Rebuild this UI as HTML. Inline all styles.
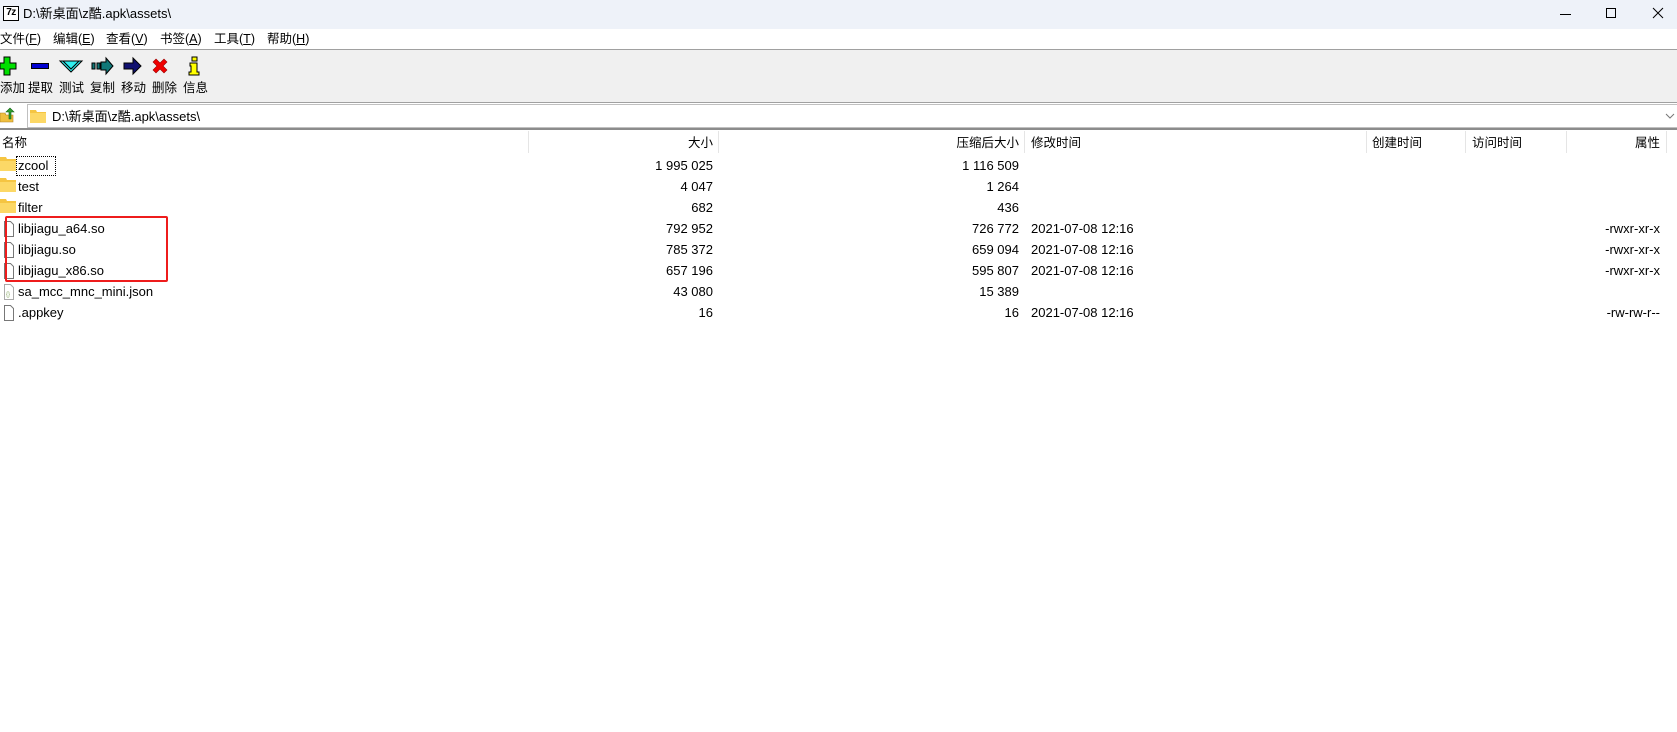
<!DOCTYPE html>
<html><head><meta charset="utf-8"><style>
*{margin:0;padding:0;box-sizing:border-box}
body{width:1677px;height:732px;background:#fff;position:relative;overflow:hidden;font-family:"Liberation Sans","Noto Sans CJK SC",sans-serif;font-size:12px;color:#000}
.a{position:absolute;white-space:nowrap;line-height:16px}
.r{text-align:right}
.d{line-height:21px;font-size:13px}
.h{font-size:12.5px}
</style></head><body>
<!-- title bar -->
<div class="a" style="left:0;top:0;width:1677px;height:29px;background:#eef2f9"></div>
<div class="a" style="left:3px;top:6px;width:16px;height:15px;border:1.5px solid #000;background:#fff;font:bold 10px 'Liberation Sans';line-height:12px;text-align:center;letter-spacing:-0.5px">7z</div>
<div class="a" style="left:23px;top:6px;font-size:13px">D:\新桌面\z酷.apk\assets\</div>
<svg class="a" style="left:1556px;top:6px" width="115" height="16"><path d="M4 8.5h11" stroke="#000" stroke-width="1"/><rect x="50.5" y="2.5" width="9" height="9" fill="none" stroke="#000"/><path d="M97 2l10 10M107 2l-10 10" stroke="#000" stroke-width="1"/></svg>
<!-- menu -->
<div class="a" style="left:0;top:29px;width:1677px;height:20px;background:#fff"></div>
<div class="a h" style="left:0;top:31px">文件(<u>F</u>)</div>
<div class="a h" style="left:53px;top:31px">编辑(<u>E</u>)</div>
<div class="a h" style="left:106px;top:31px">查看(<u>V</u>)</div>
<div class="a h" style="left:160px;top:31px">书签(<u>A</u>)</div>
<div class="a h" style="left:214px;top:31px">工具(<u>T</u>)</div>
<div class="a h" style="left:267px;top:31px">帮助(<u>H</u>)</div>
<!-- toolbar -->
<div class="a" style="left:0;top:49px;width:1677px;height:54px;background:#f0f0f0;border-top:1px solid #a0a0a0;border-bottom:1px solid #a0a0a0"></div>
<svg class="a" style="left:0;top:56px" width="210" height="20">
<path d="M4 1h6v6h6v6h-6v6h-6v-6h-4v-6h4z" fill="#00e000" stroke="#000"/>
<rect x="31.5" y="7.5" width="17" height="5" fill="#0000d0" stroke="#000"/>
<path d="M60 5h22l-11 11z" fill="#30f0f0" stroke="#000"/><path d="M63 5l8 8 8-8" fill="none" stroke="#000"/>
<path d="M92 7h3v6h-3zM97 7h3v6h-3zM101 6h5v-4l7 8-7 8v-4h-5z" fill="#107878" stroke="#000"/>
<path d="M124 7h9v-5l8 8-8 8v-5h-9z" fill="#101070" stroke="#000"/>
<path d="M156 3l4 4 4-4 3 3-4 4 4 4-3 3-4-4-4 4-3-3 4-4-4-4z" fill="#f00000" stroke="#900" stroke-width=".6"/>
<rect x="192" y="1" width="5" height="4" fill="#ff0" stroke="#000"/><path d="M190 7h7v9h2v3h-10v-3h2v-6h-1z" fill="#ff0" stroke="#000"/>
</svg>
<div class="a h" style="left:0;top:80px">添加</div>
<div class="a h" style="left:28px;top:80px">提取</div>
<div class="a h" style="left:59px;top:80px">测试</div>
<div class="a h" style="left:90px;top:80px">复制</div>
<div class="a h" style="left:121px;top:80px">移动</div>
<div class="a h" style="left:152px;top:80px">删除</div>
<div class="a h" style="left:183px;top:80px">信息</div>
<!-- address -->
<svg class="a" style="left:0;top:107px" width="16" height="16"><path d="M0 6h5l1 2h7v7h-13z" fill="#f0c040" stroke="#b08020" stroke-width=".6"/><path d="M9 12v-7h-3l4-4 4 4h-3v7z" fill="#30a030" stroke="#106010" stroke-width=".6"/></svg>
<div class="a" style="left:27px;top:104px;width:1650px;height:24px;border:1px solid #c0c0c0;border-right:none;background:#fff"></div>
<svg class="a" style="left:30px;top:109px" width="16" height="14"><path d="M0 1h6l1 2h9v11h-16z" fill="#f5c542"/><path d="M0 4h16v10h-16z" fill="#fcd866"/></svg>
<div class="a" style="left:52px;top:109px;font-size:13px">D:\新桌面\z酷.apk\assets\</div>
<svg class="a" style="left:1665px;top:112px" width="10" height="8"><path d="M1 2l4 4 4-4" fill="none" stroke="#777"/></svg>
<div class="a" style="left:0;top:128px;width:1677px;height:2px;background:#8c8c8c"></div>
<!-- header -->
<div class="a h" style="left:2px;top:135px">名称</div>
<div class="a" style="left:528px;top:131px;width:1px;height:22px;background:#e5e5e5"></div>
<div class="a h r" style="left:600px;top:135px;width:113px">大小</div>
<div class="a" style="left:718px;top:131px;width:1px;height:22px;background:#e5e5e5"></div>
<div class="a h r" style="left:900px;top:135px;width:119px">压缩后大小</div>
<div class="a" style="left:1024px;top:131px;width:1px;height:22px;background:#e5e5e5"></div>
<div class="a h" style="left:1031px;top:135px">修改时间</div>
<div class="a" style="left:1366px;top:131px;width:1px;height:22px;background:#e5e5e5"></div>
<div class="a h" style="left:1372px;top:135px">创建时间</div>
<div class="a" style="left:1465px;top:131px;width:1px;height:22px;background:#e5e5e5"></div>
<div class="a h" style="left:1472px;top:135px">访问时间</div>
<div class="a" style="left:1566px;top:131px;width:1px;height:22px;background:#e5e5e5"></div>
<div class="a h r" style="left:1600px;top:135px;width:60px">属性</div>
<div class="a" style="left:1666px;top:131px;width:1px;height:22px;background:#e5e5e5"></div>
<!-- row icons -->
<svg class="a" style="left:0;top:155px" width="16" height="170">
<g fill="#f5c542"><path d="M0 2h6l1 2h9v12h-16z"/><path d="M0 23h6l1 2h9v12h-16z"/><path d="M0 44h6l1 2h9v12h-16z"/></g>
<g fill="#fcd866"><path d="M0 6h16v10h-16z"/><path d="M0 27h16v10h-16z"/><path d="M0 48h16v10h-16z"/></g>
<g fill="#fff" stroke="#777" stroke-width="1"><path d="M4.5 66.5h6l3 3v12h-9z"/><path d="M4.5 87.5h6l3 3v12h-9z"/><path d="M4.5 108.5h6l3 3v12h-9z"/><path d="M4.5 150.5h6l3 3v12h-9z"/></g>
<path d="M4.5 129.5h6l3 3v12h-9z" fill="#fff" stroke="#aaa"/><text x="6" y="141" font-size="6" fill="#8a6">{}</text>
</svg>
<div class="a" style="left:16px;top:156px;width:40px;height:20px;border:1px dotted #000"></div>
<div class="a d" style="left:18px;top:155px">zcool<br>test<br>filter<br>libjiagu_a64.so<br>libjiagu.so<br>libjiagu_x86.so<br>sa_mcc_mnc_mini.json<br>.appkey</div>
<div class="a" style="left:5px;top:216px;width:163px;height:66px;border:2px solid #ee1c1c;border-radius:2px"></div>
<div class="a d r" style="left:600px;top:155px;width:113px">1 995 025<br>4 047<br>682<br>792 952<br>785 372<br>657 196<br>43 080<br>16</div>
<div class="a d r" style="left:900px;top:155px;width:119px">1 116 509<br>1 264<br>436<br>726 772<br>659 094<br>595 807<br>15 389<br>16</div>
<div class="a d" style="left:1031px;top:218px">2021-07-08 12:16<br>2021-07-08 12:16<br>2021-07-08 12:16<br><br>2021-07-08 12:16</div>
<div class="a d r" style="left:1560px;top:218px;width:100px">-rwxr-xr-x<br>-rwxr-xr-x<br>-rwxr-xr-x<br><br>-rw-rw-r--</div>
</body></html>
